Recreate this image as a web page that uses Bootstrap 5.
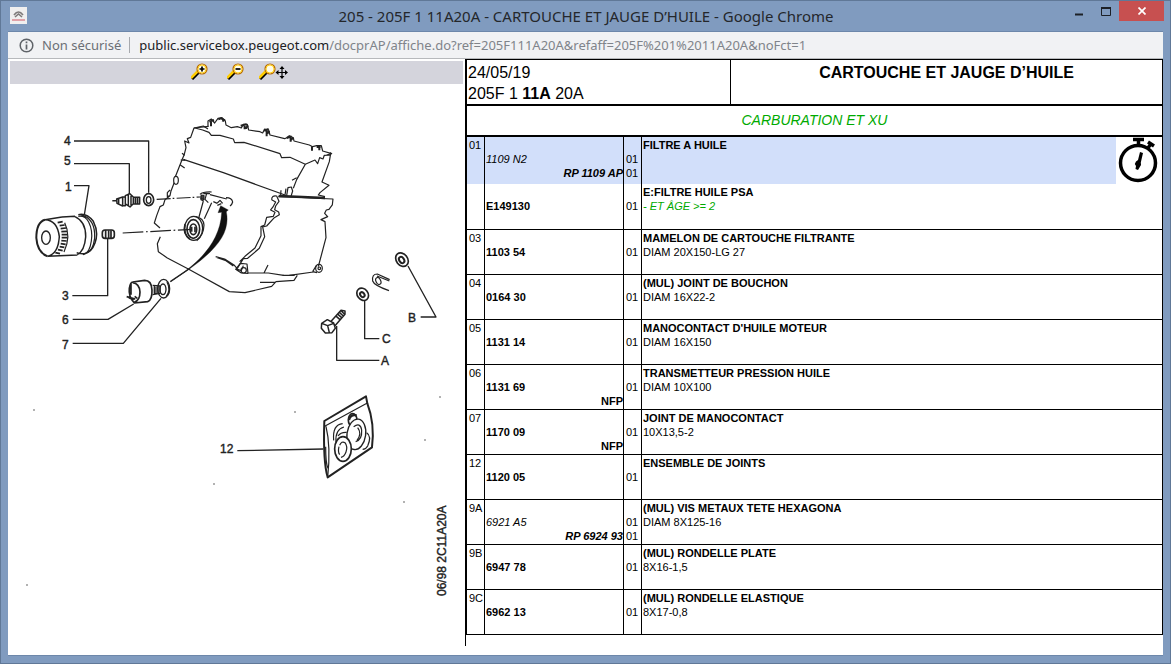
<!DOCTYPE html>
<html lang="fr">
<head>
<meta charset="utf-8">
<meta name="viewport" content="width=device-width, initial-scale=1">
<title>205 - 205F 1 11A20A - CARTOUCHE ET JAUGE D’HUILE</title>
<link href="https://cdn.jsdelivr.net/npm/bootstrap@5.3.0/dist/css/bootstrap.min.css" rel="stylesheet">
<style>
  body { font-family: "Liberation Sans", Arial, sans-serif; color: #000; }
  .window-frame { background: #809bbf; border: 1px solid #607897; padding: 0 7px 7px; }
  .window-title { display: grid; grid-template-columns: 1fr auto 1fr; height: 30px; margin-right: -1px; }
  .window-title h1 { font: 15px/30px "Noto Sans", "Open Sans", sans-serif; color: #24272b; }
  .app-icon { margin: 6px 0 0 2px; }
  .win-btn { width: 27px; height: 20px; border: 0; padding: 0; background: none; display: flex; align-items: center; justify-content: center; }
  .win-btn.close-btn { width: 45px; background: #c75050; }
  .page-area { border: 1px solid #6d87aa; border-width: 1px 0; }
  .address { height: 27px; background: #f1f2f4; border-bottom: 1px solid #b7b9bc; font: 13px/26px "Noto Sans", "Open Sans", sans-serif; color: #80848a; padding-left: 11px; }
  .address .state { color: #6b6f75; }
  .address .sep { width: 1px; height: 16px; background: #a7aaae; margin: 0 9px 0 8px; }
  .address .host { color: #202124; }
  .panes { display: grid; grid-template-columns: 457fr 698fr; }
  .zoombar { height: 23px; background: #d4d4dc; margin: 2px 2px 0; padding: 2px 0 0 181px; gap: 19px; }
  .zoombar button { border: 0; padding: 0; background: none; display: flex; }
  .zoombar .pan-btn { margin-left: -4px; }
  .doc { border-left: 1px solid #000; margin-bottom: 9px; }
  .sheet { border: 1px solid #000; border-width: 1px 1px 0 1px; }
  .sheet-head { display: grid; grid-template-columns: 38fr 62fr; font-size: 16px; line-height: 21px; border-bottom: 2px solid #000; height: 46px; }
  .sheet-head > :first-child { border-right: 1px solid #000; padding: 2px 1px 0; }
  .sheet-head h2 { font-size: 16px; font-weight: bold; line-height: 21px; padding-top: 2px; text-align: center; }
  .family { font-size: 14px; line-height: 29px; height: 31px; border-bottom: 2px solid #000; text-align: center; }
  .note { color: #00aa00; font-style: italic; }
  .parts { width: 100%; table-layout: fixed; border-collapse: separate; border-spacing: 0; font-size: 11px; line-height: 14px; }
  .parts td { vertical-align: top; height: 45px; padding: 1px 1px 0; border-right: 1px solid #000; border-bottom: 1px solid #000; white-space: nowrap; }
  .parts td:last-child { border-right: 0; }
  .parts td:nth-child(1), .parts td:nth-child(3) { padding-left: 2px; }
  .parts td:nth-child(2) { padding: 15px 0 0 1px; font-weight: bold; }
  .parts td:nth-child(3) { padding-top: 15px; }
  .parts .old { font-weight: normal; font-style: italic; }
  .parts .right { display: block; text-align: right; }
  .parts .picked td { background: #d2dffa; height: 47px; border-bottom: 0; }
  .parts .variant td { height: 46px; }
  .timer { background: #fff; width: 46px; height: 47px; margin: -1px -1px 0 0; }
  .drawing { display: block; width: 100%; height: auto; }
  .drawing text { font: 12px "Liberation Sans", sans-serif; fill: #222; stroke: #222; stroke-width: .4px; }
</style>
</head>
<body>
<div class="window-frame min-vh-100 d-flex flex-column">
  <header class="window-title">
    <svg class="app-icon" width="17" height="17" viewBox="0 0 17 17" aria-hidden="true">
      <rect width="17" height="17" fill="#f0efef"/>
      <path d="M4 8q4.500-6 9 0M5 10l3.500-3 3.500 3" fill="none" stroke="#7e7a7a" stroke-width="1.600"/>
      <path d="M2 13h13" stroke="#db8790" stroke-width="1.500"/>
    </svg>
    <h1 class="m-0">205 - 205F 1 11A20A - CARTOUCHE ET JAUGE D’HUILE - Google Chrome</h1>
    <div class="d-flex justify-content-end">
      <button class="win-btn" type="button" aria-label="Réduire"><svg width="10" height="10"><path d="M1 8.500h8" stroke="#1c2026" stroke-width="2"/></svg></button>
      <button class="win-btn" type="button" aria-label="Agrandir"><svg width="10" height="9"><path d="M.5 1v7.500h9V1" fill="none" stroke="#1c2026"/><path d="M0 1h10" stroke="#1c2026" stroke-width="2"/></svg></button>
      <button class="win-btn close-btn" type="button" aria-label="Fermer"><svg width="8" height="8"><path d="M.5.5l7 7M7.500.5l-7 7" stroke="#fff" stroke-width="1.700"/></svg></button>
    </div>
  </header>

  <main class="page-area bg-white flex-grow-1 d-flex flex-column">
    <div class="address d-flex align-items-center">
      <svg class="me-2" width="15" height="15" viewBox="0 0 15 15" aria-hidden="true"><circle cx="7.500" cy="7.500" r="6.300" fill="none" stroke="#5f6368" stroke-width="1.500"/><path d="M7.500 3.500v1.700M7.500 6.500v5" stroke="#5f6368" stroke-width="1.700"/></svg>
      <span class="state text-nowrap">Non sécurisé</span>
      <span class="sep"></span>
      <span class="text-truncate"><span class="host">public.servicebox.peugeot.com</span>/docprAP/affiche.do?ref=205F111A20A&amp;refaff=205F%201%2011A20A&amp;noFct=1</span>
    </div>

    <div class="panes flex-grow-1">
      <section>
        <div class="zoombar d-flex align-items-start">
          <button type="button" aria-label="Zoom avant"><svg width="17" height="17" viewBox="0 0 17 17"><path d="M1 16l7-7" stroke="#000" stroke-width="3"/><path d="M0 15l7-7" stroke="#fc0" stroke-width="2.500"/><circle cx="11" cy="6" r="5" fill="#fffce8" stroke="#b86b00" stroke-width="1.200"/><circle cx="11" cy="6" r="4" fill="none" stroke="#ffd21c"/><path d="M8.500 6h5M11 3.500v5" stroke="#000" stroke-width="1.700"/></svg></button>
          <button type="button" aria-label="Zoom arrière"><svg width="17" height="17" viewBox="0 0 17 17"><path d="M1 16l7-7" stroke="#000" stroke-width="3"/><path d="M0 15l7-7" stroke="#fc0" stroke-width="2.500"/><circle cx="11" cy="6" r="5" fill="#fffce8" stroke="#b86b00" stroke-width="1.200"/><circle cx="11" cy="6" r="4" fill="none" stroke="#ffd21c"/><path d="M8.500 6h5" stroke="#000" stroke-width="1.700"/></svg></button>
          <button class="pan-btn" type="button" aria-label="Déplacer"><svg width="29" height="17" viewBox="0 0 29 17"><path d="M1 16l7-7" stroke="#000" stroke-width="3"/><path d="M0 15l7-7" stroke="#fc0" stroke-width="2.500"/><circle cx="11" cy="6" r="5" fill="#fffce8" stroke="#b86b00" stroke-width="1.200"/><circle cx="11" cy="6" r="4" fill="none" stroke="#ffd21c"/><path d="M18 9.500h10M23 4.500v10" stroke="#000" stroke-width="1.200"/><path d="M23 3l2.500 3h-5zM23 16l2.500-3h-5zM16.500 9.500l3-2.500v5zM29 9.500l-3-2.500v5z"/></svg></button>
        </div>

        <svg class="drawing" viewBox="8 84 457 562" role="img" aria-label="Schéma des pièces">
          <g fill="none" stroke="#222" stroke-linejoin="round" stroke-width="3.600">
            <!-- engine block -->
            <g transform="translate(150 105) scale(.3333)">
              <path d="M175 64L132 69L122 97L112 101L117 114L104 108L108 128L102 151L97 162L76 215L72 235L63 258L60 272L52 275V263L60 255M60 272L45 284L40 300L30 305L20 332L13 354L30 369M31 395L22 416L25 440L52 459L115 492L238 560L285 563L365 544L378 530L432 526L442 511"/>
              <path d="M135 69L158 75L177 82L184 91L210 91L250 102L254 113L282 112L390 146L395 158L420 157L466 178L440 224L430 250M132 69L160 63L174 72M100 163L220 203L405 270M96 145l8 6M90 179l14 10M92 165l14 1"/>
              <path d="M174 66V48L184 42L194 54L204 40L216 38L226 48L228 60L244 68L262 65L274 69L280 58L292 58L296 75L330 80L338 84L344 72L356 75L360 90L404 101L410 98L418 92L430 98L432 108L478 120L488 125L500 122L514 122L518 138L545 146L530 150"/>
              <path d="M178 50l14-5M183 46v18M205 43l8-3 12 6M222 42l-4 8M272 62l18-4M284 56v17M294 61l-6 9M342 77l14-5M350 72v22M358 78l-6 8M410 99l15-5M422 94v16M430 98l-8 8M486 124v13M500 126l12 0M508 124v12" stroke-width="6"/>
              <path d="M466 178L495 165L503 176L509 158L519 162L523 151L541 150L542 142M542 146L538 170L516 231L537 241L510 263L505 270L525 275M385 275L549 282L547 300L537 313L529 315L524 325L533 335L513 344L525 350L528 398L505 485"/>
              <path d="M386 273L440 275L525 279" stroke-width="7"/>
              <path d="M365 284Q365 270 380 273L387 289L377 303L374 314L386 321L388 329L373 338L350 363L338 366L344 395L328 430L293 460L280 461L262 490M365 284L377 291L369 306L362 315L375 322L370 334L350 337L344 360L333 365L333 392L315 429L285 454L269 470"/>
              <path d="M392 270l1-14M405 270l3-19M410 272l4-24 10-2 4 12-5 16M440 218l-14 8M197 455l27 7 28 18 12 14M200 457l28 10 22 16M257 493l14-18 20 2 3 28-20-1zM262 493l12 4 6-15M342 504l12-24M295 504l60 0 46 7M418 511l72-10M330 532h45"/>
              <circle cx="281" cy="496" r="8"/><ellipse cx="507" cy="490" rx="10" ry="12"/><circle cx="508" cy="490" r="4"/><path d="M488 500l12-20M488 500l13 3M398 511h36"/>
              <ellipse cx="78" cy="226" rx="7" ry="12" fill="#fff"/>
              <!-- filter mounting boss -->
              <path d="M153 272v12l8 4M150 268q8-8 35-7M160 266l20 0M170 265l-5 18 10 10M180 269l50 13M190 290l12 5M228 278q18 0 20 13-2 8-8 12M160 288L147 336M185 293L163 341M202 294l8-8 8 9M202 301l12-5"/>
              <path d="M154 270l8 2v12l-9-3z" fill="#444"/>
              <ellipse cx="131" cy="370" rx="27" ry="36" stroke-width="4"/><ellipse cx="130" cy="372" rx="19" ry="28" stroke-width="5"/><ellipse cx="130" cy="373" rx="10" ry="16" stroke-width="5"/>
              <path d="M138 335q23 5 24 25-1 31-22 47"/>
              <path d="M105 358q-8 30 15 44M125 365v15M135 365v17" stroke-width="5"/>
              <path d="M20 283L150 276" stroke-dasharray="42 6 5 7"/>
              <path d="M-82 384L126 373" stroke-dasharray="62 8 5 8"/>
              <path d="M61 530C105 500 210 435 215 322L204 323L212 302L235 315L229 320C245 395 180 455 61 530Z" fill="#111" stroke-width="1"/>
              <path d="M61 530L120 490" stroke-width="4"/>
            </g>
            <!-- switch, washer and callouts 4, 5, 1 -->
            <g transform="translate(20 105) scale(.3333)">
              <path d="M162 108H386V263M162 176H328V267M162 242H207L193 330" stroke-width="4"/>
              <ellipse cx="386" cy="284" rx="15" ry="18" stroke-width="5"/><ellipse cx="386" cy="285" rx="7" ry="10" stroke-width="4"/>
              <path d="M277 287h13M290 282l18-6v27l-17-8zM296 280v16M308 276h8v26h-8M316 272l13-6 11 10v20l-10 10-14-9zM325 269v34M333 273v28M340 277h19v20h-19M346 277v20M352 277v20M358 278v18" stroke-width="4.500"/>
            </g>
            <!-- oil filter, nipple, pressure sensor -->
            <g transform="translate(20 210) scale(.3333)">
              <path d="M75 29Q49 36 49 84Q52 128 83 139" stroke-width="6"/>
              <path d="M75 29L126 21M83 139L172 135M75 29Q112 30 118 80Q115 132 83 139M126 21L165 19M165 20q33 15 32 61-3 41-25 53M175 14q25-6 45 20 17 33 5 65-10 28-32 32-15 1-23-3" stroke-width="4.500"/>
              <path d="M175 19q20-3 31 17 13 26 8 57-5 37-25 41M182 14q45 12 42 70-5 42-28 46"/>
              <ellipse cx="78" cy="83" rx="13" ry="20" stroke-width="4"/>
              <path d="M113 38l15-3M119 47l15-2M122 56l16-2M124 65l17-1M125 74h17M125 83h17M124 92l16 1M122 101l15 2M119 110l14 2M114 119l14 3M106 128l14 3" stroke-width="5"/><path d="M134 38q20 40-2 88"/>
              <rect x="247" y="60" width="36" height="25" rx="8" stroke-width="5"/><path d="M257 60v25M266 61v24M273 61v24" stroke-width="5"/>
              <path d="M263 86V257H157M158 328H264L341 282M158 400H310L423 265" stroke-width="4"/>
              <path d="M338 216L374 211Q395 211 396 240Q397 270 383 275L343 279Q325 260 328 235Q331 216 338 216ZM338 218q20 2 22 28 0 25-17 31M320 260l26 7M344 259l8 6M326 263l15 6M333 220v34" stroke-width="5"/>
              <path d="M398 226l22 2v22l-22 4M403 227v25M408 227v25M414 228v22" stroke-width="4"/>
              <ellipse cx="431" cy="236" rx="18" ry="28" stroke-width="4"/><ellipse cx="429" cy="238" rx="9" ry="16" stroke-width="4"/><path d="M441 216q13 25-3 45"/>
            </g>
            <!-- bolt and washers A, B, C -->
            <g transform="translate(300 240) scale(.3333)">
              <path d="M324 78L408 231H362M194 181V296H238M110 258V361H238" stroke-width="4"/>
              <ellipse cx="306" cy="59" rx="17" ry="22" transform="rotate(-38 306 59)" stroke-width="5"/><ellipse cx="305" cy="60" rx="7" ry="10" transform="rotate(-35 305 60)" stroke-width="6"/>
              <ellipse cx="188" cy="163" rx="16" ry="20" transform="rotate(-38 188 163)" stroke-width="5"/><ellipse cx="187" cy="164" rx="6" ry="8" transform="rotate(-38 187 164)" stroke-width="6"/>
              <path d="M269 119L232 102Q215 102 218 123Q222 136 267 152M268 123l-37-15"/><ellipse cx="235" cy="123" rx="7" ry="11" transform="rotate(-25 235 123)"/>
              <path d="M65 250l17-11 19 10 5 16-10 13-20 1-12-14zM65 250l18 7 18-7M83 257l5 21M94 243l29-32 12 2 0 10-30 34M109 229l11 10M114 223l11 10M119 218l11 10M124 213l9 9" stroke-width="4.500"/>
            </g>
            <!-- gasket bag -->
            <g transform="translate(200 380) scale(.3333)">
              <path d="M112 212L370 207" stroke-width="4"/>
              <path d="M373 123L498 49L502 70Q525 130 516 202L383 292Q369 245 373 123Z" stroke-width="6"/>
              <path d="M374 139L502 69M378 139Q393 200 383 292M377 200q0 50 7 65"/>
              <path d="M401 181Q397 134 428 131M408 187Q405 148 432 141M414 168q8-12 26-11M500 158q16 10 3 40-5 10-15 10"/>
              <ellipse cx="458" cy="120" rx="13" ry="19" stroke-width="5" fill="#fff"/><path d="M447 120q4-18 23-14" stroke-width="7"/>
              <ellipse cx="469" cy="163" rx="28" ry="46" fill="#fff" transform="rotate(8 469 163)" stroke-width="4"/><path d="M461 140q20-14 24 10 2 29-18 35M473 143q14 18-2 38"/>
              <ellipse cx="429" cy="207" rx="25" ry="37" stroke-width="5" fill="#fff"/><path d="M419 196q6-14 16-8 9 12 3 28-5 14-15 16M417 200q-4 16 2 24"/>
            </g>
          </g>
          <g fill="#999"><circle cx="295" cy="412" r="1"/><circle cx="214" cy="484" r="1"/><circle cx="404" cy="502" r="1"/><circle cx="440" cy="397" r="1"/><circle cx="425" cy="440" r="1"/><circle cx="34" cy="410" r="1"/><circle cx="27" cy="585" r="1"/></g>
          <text x="64" y="145">4</text><text x="64" y="165">5</text><text x="65" y="191">1</text>
          <text x="62" y="300">3</text><text x="62" y="324">6</text><text x="62" y="349">7</text>
          <text x="408" y="322">B</text><text x="382" y="343">C</text><text x="381" y="365">A</text>
          <text x="220" y="453">12</text>
          <text transform="translate(446 596) rotate(-90)">06/98 2C11A20A</text>
        </svg>
      </section>

      <section class="doc">
        <div class="sheet">
          <div class="sheet-head">
            <div>24/05/19<br>205F 1 <b>11A</b> 20A</div>
            <h2 class="m-0">CARTOUCHE ET JAUGE D’HUILE</h2>
          </div>
          <div class="family note">CARBURATION ET XU</div>
          <table class="parts">
            <colgroup><col style="width:18px"><col style="width:139px"><col style="width:18px"><col></colgroup>
            <tbody>
              <tr class="picked"><td>01</td><td><span class="old">1109 N2</span><i class="right">RP 1109 AP</i></td><td>01<br>01</td><td><svg class="timer float-end" viewBox="0 0 46 47" role="img" aria-label="Temps"><circle cx="22" cy="26" r="17.500" fill="none" stroke="#000" stroke-width="3.500"/><path d="M17 2.500h11M22.500 3v6M32 5l6 4M35 7l-4 5" stroke="#000" stroke-width="3.500"/><path d="M24 15L27 16L24.800 25.500L25 28L22 33L19.500 32L20 29L18.800 27L20 24.500L22 23Z"/></svg><b>FILTRE A HUILE</b></td></tr>
              <tr class="variant"><td></td><td>E149130</td><td>01</td><td><b>E:FILTRE HUILE PSA</b><br><span class="note">- ET ÂGE &gt;= 2</span></td></tr>
              <tr><td>03</td><td>1103 54</td><td>01</td><td><b>MAMELON DE CARTOUCHE FILTRANTE</b><br>DIAM 20X150-LG 27</td></tr>
              <tr><td>04</td><td>0164 30</td><td>01</td><td><b>(MUL) JOINT DE BOUCHON</b><br>DIAM 16X22-2</td></tr>
              <tr><td>05</td><td>1131 14</td><td>01</td><td><b>MANOCONTACT D'HUILE MOTEUR</b><br>DIAM 16X150</td></tr>
              <tr><td>06</td><td>1131 69<span class="right">NFP</span></td><td>01</td><td><b>TRANSMETTEUR PRESSION HUILE</b><br>DIAM 10X100</td></tr>
              <tr><td>07</td><td>1170 09<span class="right">NFP</span></td><td>01</td><td><b>JOINT DE MANOCONTACT</b><br>10X13,5-2</td></tr>
              <tr><td>12</td><td>1120 05</td><td>01</td><td><b>ENSEMBLE DE JOINTS</b></td></tr>
              <tr><td>9A</td><td><span class="old">6921 A5</span><i class="right">RP 6924 93</i></td><td>01<br>01</td><td><b>(MUL) VIS METAUX TETE HEXAGONA</b><br>DIAM 8X125-16</td></tr>
              <tr><td>9B</td><td>6947 78</td><td>01</td><td><b>(MUL) RONDELLE PLATE</b><br>8X16-1,5</td></tr>
              <tr><td>9C</td><td>6962 13</td><td>01</td><td><b>(MUL) RONDELLE ELASTIQUE</b><br>8X17-0,8</td></tr>
            </tbody>
          </table>
        </div>
      </section>
    </div>
  </main>
</div>
<script src="https://cdn.jsdelivr.net/npm/bootstrap@5.3.0/dist/js/bootstrap.bundle.min.js"></script>
</body>
</html>
